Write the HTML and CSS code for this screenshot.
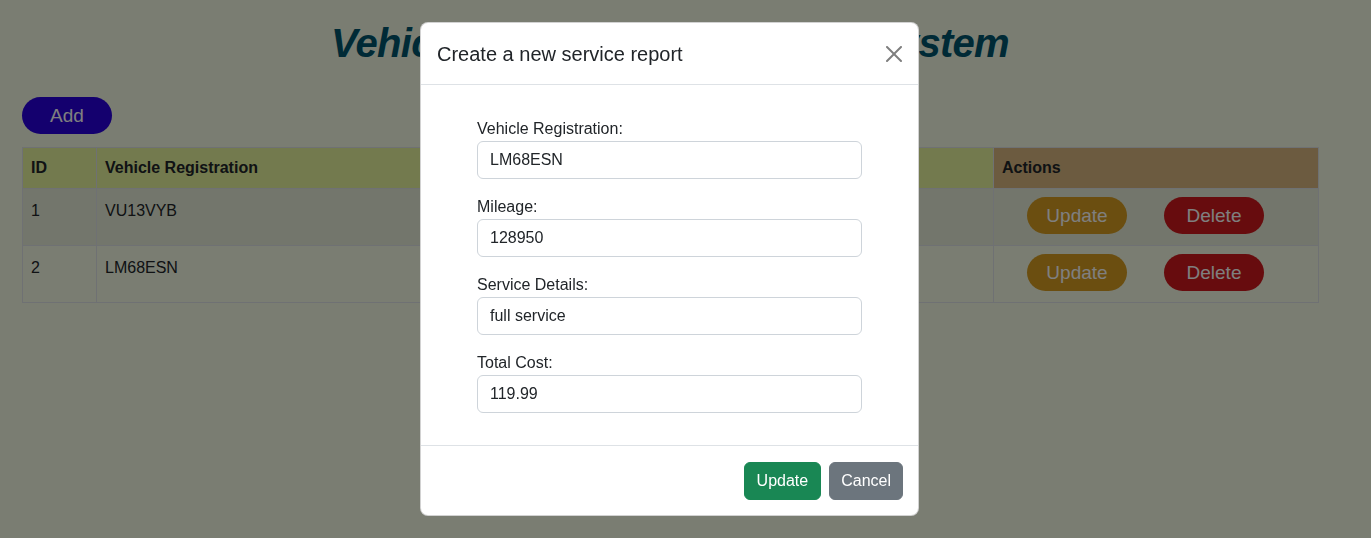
FILE: index.html
```html
<!DOCTYPE html>
<html lang="en">
<head>
<meta charset="utf-8">
<title>Vehicle Service Management System</title>
<link rel="stylesheet" href="styles.css">
</head>
<body>
<main class="container">
  <h1 class="page-title">Vehicle Service Management System</h1>
  <button class="btn-add" type="button">Add</button>
  <table class="records">
    <thead>
      <tr>
        <th class="col-id">ID</th>
        <th class="col-reg">Vehicle Registration</th>
        <th class="col-mileage">Mileage</th>
        <th class="col-details">Service Details</th>
        <th class="col-cost">Total Cost</th>
        <th class="col-actions">Actions</th>
      </tr>
    </thead>
    <tbody>
      <tr>
        <td>1</td>
        <td>VU13VYB</td>
        <td>54210</td>
        <td>oil change</td>
        <td>89.99</td>
        <td class="actions"><button class="pill pill-update" type="button">Update</button><button class="pill pill-delete" type="button">Delete</button></td>
      </tr>
      <tr>
        <td>2</td>
        <td>LM68ESN</td>
        <td>128950</td>
        <td>full service</td>
        <td>119.99</td>
        <td class="actions"><button class="pill pill-update" type="button">Update</button><button class="pill pill-delete" type="button">Delete</button></td>
      </tr>
    </tbody>
  </table>
</main>

<div class="backdrop"></div>

<div class="modal" role="dialog" aria-labelledby="modal-title">
  <div class="modal-header">
    <h5 class="modal-title" id="modal-title">Create a new service report</h5>
    <button class="btn-close" type="button" aria-label="Close">
      <svg viewBox="0 0 16 16" width="16" height="16" aria-hidden="true"><path d="M.293.293a1 1 0 0 1 1.414 0L8 6.586 14.293.293a1 1 0 1 1 1.414 1.414L9.414 8l6.293 6.293a1 1 0 0 1-1.414 1.414L8 9.414l-6.293 6.293a1 1 0 0 1-1.414-1.414L6.586 8 .293 1.707a1 1 0 0 1 0-1.414z"/></svg>
    </button>
  </div>
  <div class="modal-body">
    <form class="report-form">
      <div class="field">
        <label for="reg">Vehicle Registration:</label>
        <input id="reg" type="text" value="LM68ESN">
      </div>
      <div class="field">
        <label for="mileage">Mileage:</label>
        <input id="mileage" type="text" value="128950">
      </div>
      <div class="field">
        <label for="details">Service Details:</label>
        <input id="details" type="text" value="full service">
      </div>
      <div class="field">
        <label for="cost">Total Cost:</label>
        <input id="cost" type="text" value="119.99">
      </div>
    </form>
  </div>
  <div class="modal-footer">
    <button class="btn btn-success" type="button">Update</button>
    <button class="btn btn-secondary" type="button">Cancel</button>
  </div>
</div>
</body>
</html>
```

FILE: styles.css
```css
* {
  box-sizing: border-box;
}

html, body {
  height: 100%;
}

body {
  margin: 0;
  background: #f4fae4;
  color: #212529;
  font-family: "Liberation Sans", Arial, sans-serif;
  font-size: 16px;
  line-height: 24px;
  overflow: hidden;
}

.container {
  width: 1296px;
  margin-left: 22px;
}

.page-title {
  margin: 19px 0 30px;
  text-align: center;
  font-size: 40px;
  line-height: 48px;
  font-weight: 700;
  font-style: italic;
  letter-spacing: -0.7px;
  color: #00546c;
}

.btn-add {
  display: block;
  min-width: 90px;
  height: 37px;
  padding: 0 27px;
  border: 0;
  border-radius: 19px;
  background: #2800dc;
  color: #ffffff;
  font-family: inherit;
  font-size: 19px;
  line-height: 37px;
  margin-bottom: 13px;
}

.records {
  width: 1296px;
  border-collapse: collapse;
  table-layout: fixed;
}

.records th,
.records td {
  border: 1px solid #dee2e6;
  padding: 8px 8px;
  text-align: left;
  vertical-align: top;
}

.records th {
  font-weight: 700;
  background: #e6f49c;
}

.records th.col-actions {
  background: #d8b680;
}

.col-id { width: 74px; }
.col-reg { width: 404px; }
.col-mileage { width: 150px; }
.col-details { width: 180px; }
.col-cost { width: 163px; }
.col-actions { width: 325px; }

.records tbody tr:nth-child(odd) td {
  background: rgba(0, 0, 0, 0.05);
}

.records td {
  padding-top: 10px;
  height: 57px;
}

.records td.actions {
  padding: 8px 8px 11px 33px;
}

.pill {
  display: inline-block;
  width: 100px;
  height: 37px;
  border: 0;
  border-radius: 19px;
  color: #ffffff;
  font-family: inherit;
  font-size: 19px;
  line-height: 37px;
  padding: 0;
  vertical-align: top;
}

.pill + .pill {
  margin-left: 37px;
}

.pill-update {
  background: #d69c20;
}

.pill-delete {
  background: #ce181c;
}

.backdrop {
  position: fixed;
  inset: 0;
  background: rgba(0, 0, 0, 0.5);
}

.modal {
  position: absolute;
  left: 420px;
  top: 22px;
  width: 499px;
  background: #ffffff;
  border: 1px solid rgba(0, 0, 0, 0.175);
  border-radius: 8px;
  color: #212529;
}

.modal-header {
  display: flex;
  align-items: center;
  padding: 16px 16px 15px;
  border-bottom: 1px solid #dee2e6;
}

.modal-title {
  margin: 0;
  font-size: 20px;
  line-height: 30px;
  font-weight: 400;
}

.btn-close {
  display: flex;
  align-items: center;
  justify-content: center;
  width: 32px;
  height: 32px;
  margin: -8px -8px -8px auto;
  padding: 0;
  border: 0;
  background: transparent;
  opacity: 0.5;
}

.btn-close svg {
  fill: #000000;
}

.modal-body {
  padding: 16px;
}

.report-form {
  padding: 16px 40px 0;
}

.field {
  margin-bottom: 16px;
}

.field label {
  display: block;
  font-size: 16px;
  line-height: 24px;
}

.field input {
  display: block;
  width: 100%;
  height: 38px;
  padding: 6px 12px;
  border: 1px solid #ced4da;
  border-radius: 6px;
  font-family: inherit;
  font-size: 16px;
  line-height: 24px;
  color: #212529;
  background: #ffffff;
}

.modal-footer {
  display: flex;
  justify-content: flex-end;
  gap: 8px;
  padding: 16px 15px 15px 16px;
  border-top: 1px solid #dee2e6;
}

.btn {
  height: 38px;
  padding: 6px 12px;
  border: 1px solid transparent;
  border-radius: 6px;
  font-family: inherit;
  font-size: 16px;
  line-height: 24px;
  color: #ffffff;
}

.btn-success {
  background: #198754;
  border-color: #198754;
}

.btn-secondary {
  padding: 6px 11px;
  background: #6c757d;
  border-color: #6c757d;
}
```
